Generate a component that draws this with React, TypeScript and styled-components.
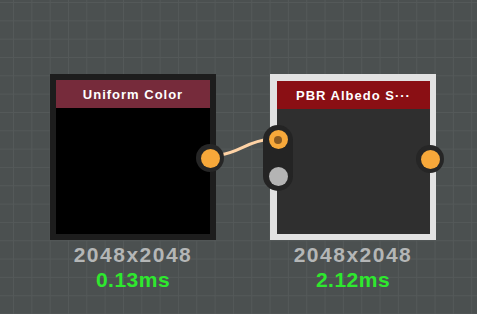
import styled, { createGlobalStyle } from "styled-components";

const GlobalStyle = createGlobalStyle`
    html, body {
        margin: 0;
        padding: 0;
        background: #4b5050;
    }
    #root {
        width: 477px;
        height: 314px;
    }
`;

function App() {
    return (
        <>
            <GlobalStyle />
            <Canvas>
                <Wire width="477" height="314">
                    <path d="M 220 155 C 240 152, 248 141, 270 139" />
                </Wire>

                <Node x={50} y={74}>
                    <Box light={false}>
                        <Header light={false}>
                            <HeaderText>Uniform Color</HeaderText>
                        </Header>
                        <Body light={false} />
                        <OutPin>
                            <Dot color="#f7a83a" />
                        </OutPin>
                    </Box>
                    <Size>2048x2048</Size>
                    <Time>0.13ms</Time>
                </Node>

                <Node x={270} y={74}>
                    <Box light={true}>
                        <Header light={true}>
                            <HeaderText>PBR Albedo S···</HeaderText>
                        </Header>
                        <Body light={true} />
                        <InPins>
                            <Dot color="#f7a83a">
                                <Core />
                            </Dot>
                            <Dot color="#b4b4b4" />
                        </InPins>
                        <OutPin>
                            <Dot color="#f7a83a" />
                        </OutPin>
                    </Box>
                    <Size>2048x2048</Size>
                    <Time>2.12ms</Time>
                </Node>
            </Canvas>
        </>
    );
}

export default App;

var
Canvas = styled.div`
    position: relative;
    width: 477px;
    height: 314px;
    overflow: hidden;
    background-color: #4b5050;
    background-image:
        linear-gradient(to right, #545959 1px, transparent 1px),
        linear-gradient(to bottom, #545959 1px, transparent 1px);
    background-size: 18.33px 18.33px;
    background-position: 13px 2px;
    font-family: "Liberation Sans", Arial, sans-serif;
`,
Wire = styled.svg`
    position: absolute;
    left: 0;
    top: 0;
    path {
        fill: none;
        stroke: #ffd3a6;
        stroke-width: 3;
        stroke-linecap: round;
    }
`,
Node = styled.div<{ x: number; y: number }>`
    position: absolute;
    left: ${p => p.x}px;
    top: ${p => p.y}px;
    width: 166px;
    display: flex;
    flex-direction: column;
    align-items: center;
`,
Box = styled.div<{ light: boolean }>`
    position: relative;
    width: 166px;
    height: 166px;
    box-sizing: border-box;
    border: 6px solid ${p => p.light ? "#e2e2e2" : "#1d1d1d"};
    border-top-width: ${p => p.light ? "7px" : "6px"};
    border-left-width: ${p => p.light ? "7px" : "6px"};
    display: flex;
    flex-direction: column;
`,
Header = styled.div<{ light: boolean }>`
    height: 28px;
    flex: none;
    background: ${p => p.light ? "#8a0f14" : "#762b3b"};
    display: flex;
    align-items: center;
    justify-content: center;
    padding-top: 1px;
    box-sizing: border-box;
`,
HeaderText = styled.span`
    color: #ffffff;
    font-size: 13px;
    font-weight: bold;
    letter-spacing: 1px;
    white-space: nowrap;
`,
Body = styled.div<{ light: boolean }>`
    flex: 1;
    background: ${p => p.light ? "#2f2f2f" : "#000000"};
`,
OutPin = styled.div`
    position: absolute;
    right: -14px;
    top: 64px;
    width: 28px;
    height: 28px;
    border-radius: 50%;
    background: #262626;
    display: flex;
    align-items: center;
    justify-content: center;
`,
InPins = styled.div`
    position: absolute;
    left: -14px;
    top: 44px;
    width: 30px;
    height: 66px;
    border-radius: 15px;
    background: #242424;
    display: flex;
    flex-direction: column;
    align-items: center;
    justify-content: space-between;
    padding: 5px 0;
    box-sizing: border-box;
`,
Dot = styled.div<{ color: string }>`
    width: 19px;
    height: 19px;
    border-radius: 50%;
    background: ${p => p.color};
    display: flex;
    align-items: center;
    justify-content: center;
`,
Core = styled.div`
    width: 8px;
    height: 8px;
    border-radius: 50%;
    background: #8a5a22;
`,
Size = styled.div`
    margin-top: 3px;
    color: #b4b6b6;
    font-size: 21px;
    font-weight: bold;
    letter-spacing: 1.5px;
    line-height: 24px;
`,
Time = styled.div`
    color: #2ee82e;
    font-size: 21px;
    font-weight: bold;
    letter-spacing: 0.5px;
    line-height: 25px;
`;
